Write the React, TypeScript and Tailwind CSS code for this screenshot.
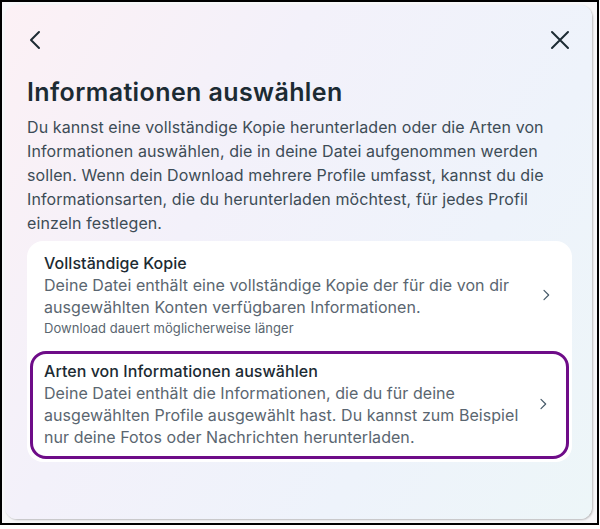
import React from "react";

const Chevron = ({ className }: { className?: string }) => (
  <svg viewBox="0 0 24 24" className={className} fill="none" stroke="currentColor" strokeWidth={1.8} strokeLinecap="round" strokeLinejoin="round">
    <path d="M9 5l7 7-7 7" />
  </svg>
);

export default function App() {
  return (
    <div className="w-[600px] h-[529px] bg-white" style={{ fontFamily: "Inter, 'Noto Sans', sans-serif" }}>
      <div className="w-[599px] h-[525px] border-2 border-black bg-[#f7f7f9] pt-[3px] pl-[3px]">
        <div className="w-[587px] h-[514px] rounded-[12px] shadow-[1px_1px_2px_rgba(0,0,0,0.25)] bg-[linear-gradient(120deg,#fcf1f5_0%,#f3f1fa_35%,#eef3fb_70%,#edf6f8_100%)] pl-[22px] pr-[20px] pt-[15px]">
          <div className="flex items-center justify-between h-[40px]">
            <svg viewBox="0 0 24 24" className="w-[24px] h-[24px] -ml-[3px] text-[#1c2b33]" fill="none" stroke="currentColor" strokeWidth={2} strokeLinecap="round" strokeLinejoin="round">
              <path d="M15 4l-8 8 8 8" />
            </svg>
            <svg viewBox="0 0 24 24" className="w-[24px] h-[24px] text-[#1c2b33]" fill="none" stroke="currentColor" strokeWidth={2} strokeLinecap="round">
              <path d="M4 4l16 16M20 4L4 20" />
            </svg>
          </div>
          <h1 className="mt-[16px] text-[25px] leading-[32px] font-semibold text-[#1c2b33] tracking-[0.4px]">
            Informationen auswählen
          </h1>
          <p className="mt-[7px] text-[16px] leading-[24px] text-[#3d4c56] tracking-[0.1px]">
            Du kannst eine vollständige Kopie herunterladen oder die Arten von Informationen auswählen, die in deine Datei aufgenommen werden sollen. Wenn dein Download mehrere Profile umfasst, kannst du die Informationsarten, die du herunterladen möchtest, für jedes Profil einzeln festlegen.
          </p>
          <div className="mt-[6px] bg-white rounded-[16px] flex flex-col">
            <div className="flex items-center pl-[17px] pr-[18px] pt-[11px] pb-[12px]">
              <div className="flex-1 tracking-[0.05px]">
                <div className="text-[16px] leading-[22px] font-medium text-[#1c2b33]">Vollständige Kopie</div>
                <div className="text-[16px] leading-[22px] text-[#5a6670]">
                  Deine Datei enthält eine vollständige Kopie der für die von dir ausgewählten Konten verfügbaren Informationen.
                </div>
                <div className="text-[13px] leading-[18px] text-[#5a6670] mt-[1px]">Download dauert möglicherweise länger</div>
              </div>
              <Chevron className="w-[16px] h-[16px] text-[#465a69] ml-[10px]" />
            </div>
            <div className="mx-[3px] mb-[3px] mt-[2px] border-[3px] border-[#6e0c88] rounded-[16px] flex items-center pl-[11px] pr-[15px] pt-[6px] pb-[8px]">
              <div className="flex-1 tracking-[0.05px]">
                <div className="text-[16px] leading-[22px] font-medium text-[#1c2b33]">Arten von Informationen auswählen</div>
                <div className="text-[16px] leading-[22px] text-[#5a6670]">
                  Deine Datei enthält die Informationen, die du für deine ausgewählten Profile ausgewählt hast. Du kannst zum Beispiel nur deine Fotos oder Nachrichten herunterladen.
                </div>
              </div>
              <Chevron className="w-[16px] h-[16px] text-[#465a69] ml-[10px]" />
            </div>
          </div>
        </div>
      </div>
    </div>
  );
}
